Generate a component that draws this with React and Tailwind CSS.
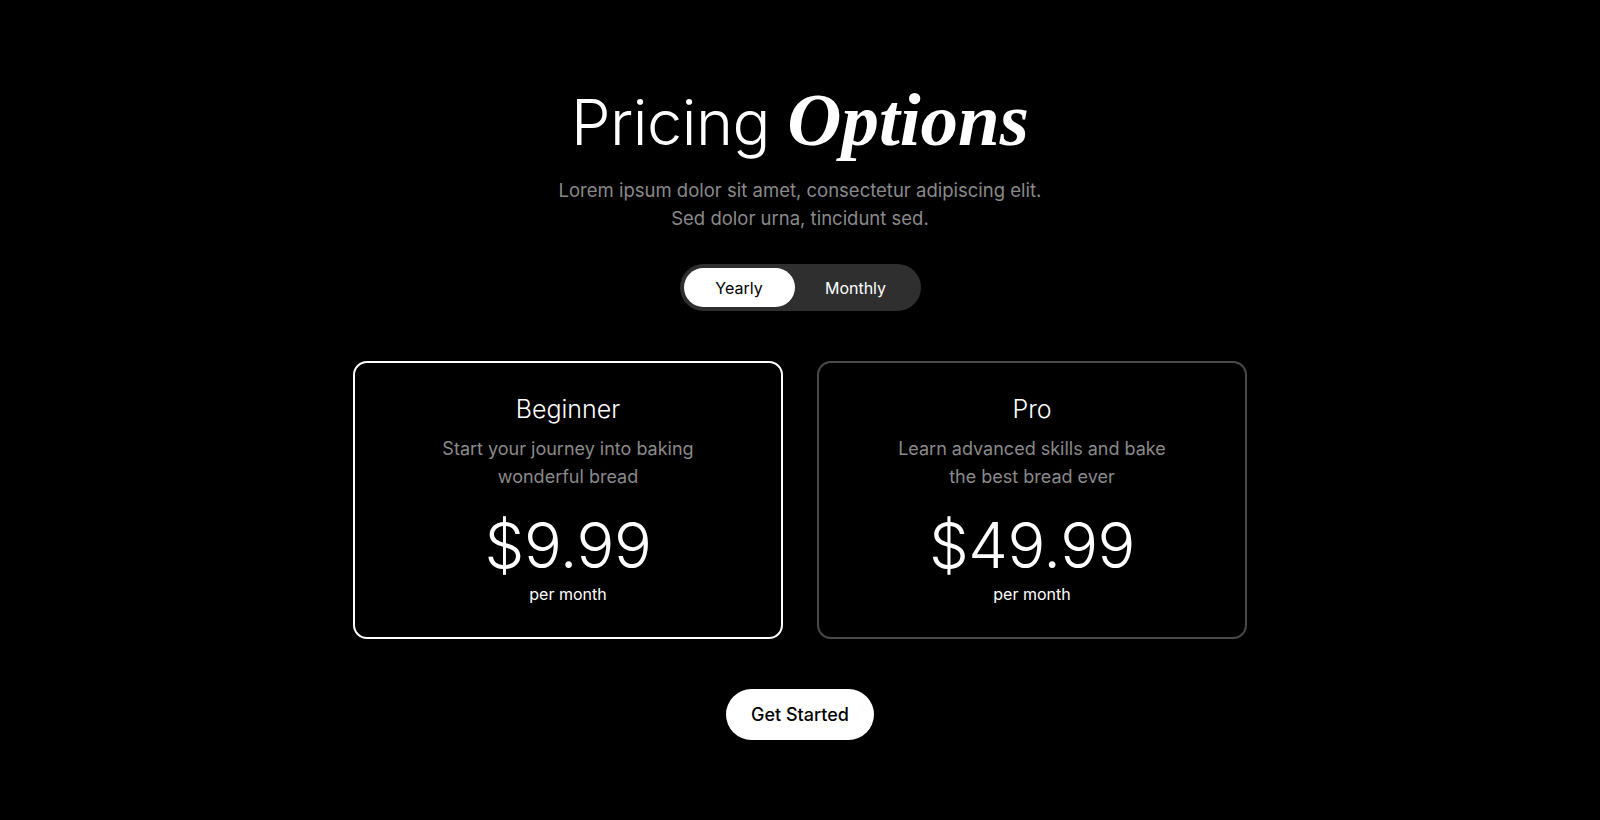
import { useState } from 'react';

const plans = [
  {
    name: 'Beginner',
    blurb: ['Start your journey into baking', 'wonderful bread'],
    price: '$9.99',
  },
  {
    name: 'Pro',
    blurb: ['Learn advanced skills and bake', 'the best bread ever'],
    price: '$49.99',
  },
];

function PlanCard({ plan, active, onClick }) {
  return (
    <div
      onClick={onClick}
      className={`w-[430px] h-[278px] rounded-[14px] border-2 flex flex-col items-center pt-[26px] cursor-pointer ${
        active ? 'border-white' : 'border-[#4a4a4a]'
      }`}
    >
      <h3 className="text-[25px] leading-[40px] font-light text-white">{plan.name}</h3>
      <p className="mt-[6px] text-[18px] leading-[28px] text-[#8a8a8a] text-center">
        {plan.blurb[0]}
        <br />
        {plan.blurb[1]}
      </p>
      <div className="mt-[21px] text-[63px] leading-[66px] font-light text-white tracking-[-0.5px]">
        {plan.price}
      </div>
      <div className="mt-[4px] text-[16px] leading-[24px] text-white">per month</div>
    </div>
  );
}

export default function App() {
  const [period, setPeriod] = useState('yearly');
  const [selected, setSelected] = useState(0);

  return (
    <div className="min-h-[820px] w-full bg-black flex flex-col items-center pt-[80px] font-['Inter','Liberation_Sans',sans-serif]">
      {/* Heading */}
      <h1 className="text-[63px] leading-[80px] font-light text-white tracking-[-0.5px]">
        Pricing{' '}
        <span className="text-[75px] font-['Liberation_Serif',serif] italic font-bold tracking-[0px]">Options</span>
      </h1>
      <p className="mt-[14px] text-[18.5px] leading-[28px] text-[#8a8a8a] text-center">
        Lorem ipsum dolor sit amet, consectetur adipiscing elit.
        <br />
        Sed dolor urna, tincidunt sed.
      </p>

      {/* Billing toggle */}
      <div className="mt-[32px] flex items-center p-[4px] rounded-full bg-[#2f2f30] w-[241px] h-[47px]">
        <button
          onClick={() => setPeriod('yearly')}
          className={`w-[111px] h-[39px] rounded-full text-[16px] ${
            period === 'yearly' ? 'bg-white text-black' : 'text-white'
          }`}
        >
          Yearly
        </button>
        <button
          onClick={() => setPeriod('monthly')}
          className={`flex-1 h-[39px] rounded-full text-[16px] ${
            period === 'monthly' ? 'bg-white text-black' : 'text-white'
          }`}
        >
          Monthly
        </button>
      </div>

      {/* Plans */}
      <div className="mt-[50px] flex gap-[34px]">
        {plans.map((plan, i) => (
          <PlanCard key={plan.name} plan={plan} active={selected === i} onClick={() => setSelected(i)} />
        ))}
      </div>

      <button className="mt-[50px] w-[148px] h-[51px] rounded-full bg-white text-black text-[18px] font-medium">
        Get Started
      </button>
    </div>
  );
}
